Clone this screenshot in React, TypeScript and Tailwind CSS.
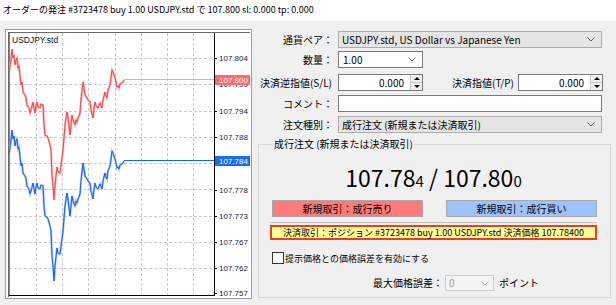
import React from "react";

const red: [number, number][] = [
  [9, 73], [11, 60], [12, 49], [13, 58], [14, 55], [15, 65], [16, 60], [17, 58], [18, 68], [19, 66],
  [21, 85], [22, 82], [23, 92], [25, 95], [26, 98], [27, 105], [29, 108], [30, 113], [31, 110], [33, 102],
  [34, 108], [35, 113], [36, 106], [37, 102], [38, 107], [40, 108], [41, 104], [43, 105], [44, 125], [45, 135],
  [47, 136], [48, 138], [50, 145], [51, 150], [52, 175], [53, 185], [54, 200], [55, 185], [57, 167], [58, 172],
  [60, 173], [61, 165], [62, 158], [63, 150], [65, 125], [67, 112], [68, 118], [70, 135], [71, 125], [72, 115],
  [73, 120], [75, 125], [76, 120], [77, 122], [78, 118], [80, 113], [81, 100], [83, 82], [84, 88], [85, 95],
  [87, 98], [88, 100], [90, 102], [91, 110], [93, 118], [94, 108], [95, 102], [96, 106], [98, 108], [100, 103],
  [102, 108], [103, 100], [105, 92], [106, 96], [107, 98], [108, 90], [110, 85], [111, 78], [112, 70], [113, 72],
  [115, 78], [116, 82], [117, 87], [118, 86], [119, 88], [120, 84], [122, 83], [123, 82], [124, 80],
];
const blue = red.map(([x, y]) => [x, y + 81] as [number, number]);
const pts = (a: [number, number][]) => a.map(([x, y]) => `${x},${y}`).join(" ");

const hGrid = [58, 84, 111, 137, 163, 189, 216, 242, 268];
const vGrid = [36.5, 62.5, 88.5, 115.5, 141.5, 167.5, 193.5];
const labels: [string, number][] = [
  ["107.804", 58], ["107.794", 111], ["107.788", 137],
  ["107.778", 190], ["107.773", 216], ["107.767", 242], ["107.762", 268], ["107.757", 293],
];
const hidden: [string, number][] = [["107.799", 84], ["107.783", 163]];

function Chart() {
  return (
    <svg width={241} height={264} viewBox="9 33 241 264" className="block">
      <defs>
        <clipPath id="c1"><rect x={215} y={85} width={35} height={6} /></clipPath>
        <clipPath id="c2"><rect x={215} y={166} width={35} height={6} /></clipPath>
      </defs>
      <rect x={9} y={33} width={241} height={264} fill="#ffffff" />
      {hGrid.map((y) => (
        <line key={y} x1={9} x2={214} y1={y + 0.5} y2={y + 0.5} stroke="#c8c8c8" strokeDasharray="3 2" />
      ))}
      {vGrid.map((x) => (
        <line key={x} x1={x} x2={x} y1={33} y2={295} stroke="#c8c8c8" strokeDasharray="3 2" />
      ))}
      <line x1={9.5} x2={9.5} y1={33} y2={296} stroke="#808080" />
      <line x1={214.5} x2={214.5} y1={33} y2={296} stroke="#000" />
      <line x1={9} x2={215} y1={295.5} y2={295.5} stroke="#000" />
      {labels.map(([t, y]) => (
        <g key={t}>
          <line x1={214} x2={217} y1={y + 0.5} y2={y + 0.5} stroke="#000" />
          <text x={219} y={y + 3} fontSize={8} fontFamily="Liberation Sans, Arial, sans-serif" fill="#1c1c3c">
            {t}
          </text>
        </g>
      ))}
      {hidden.map(([t, y], i) => (
        <g key={t}>
          <line x1={214} x2={217} y1={y + 0.5} y2={y + 0.5} stroke="#000" />
          <text x={219} y={y + 3} fontSize={8} fontFamily="Liberation Sans, Arial, sans-serif" fill="#1c1c3c" clipPath={i === 0 ? "url(#c1)" : "url(#c2)"}>
            {t}
          </text>
        </g>
      ))}
      <polyline points={pts(red)} fill="none" stroke="#f9b0b0" strokeWidth={2.2} />
      <polyline points={pts(red)} fill="none" stroke="#ee4b55" strokeWidth={1} />
      <line x1={124} x2={214} y1={79.5} y2={79.5} stroke="#f7a3a3" />
      <polyline points={pts(blue)} fill="none" stroke="#a8c4f4" strokeWidth={2.2} />
      <polyline points={pts(blue)} fill="none" stroke="#1760ea" strokeWidth={1} />
      <line x1={124} x2={214} y1={160.5} y2={160.5} stroke="#1566ea" strokeWidth={1} />
      <rect x={215} y={75} width={35} height={10} fill="#ff6a6a" />
      <text x={219} y={83} fontSize={8} fontFamily="Liberation Sans, Arial, sans-serif" fill="#ffffff">107.800</text>
      <rect x={215} y={156} width={35} height={10} fill="#1a6cf0" />
      <text x={219} y={164} fontSize={8} fontFamily="Liberation Sans, Arial, sans-serif" fill="#ffffff">107.784</text>
      <text x={12} y={43} fontSize={8.5} fontFamily="Liberation Sans, Arial, sans-serif" fill="#101030">USDJPY.std</text>
    </svg>
  );
}

function Chevron({ color = "#606060" }: { color?: string }) {
  return (
    <svg width={8} height={5} viewBox="0 0 8 5" className="block">
      <polyline points="0.5,0.5 4,4 7.5,0.5" fill="none" stroke={color} strokeWidth={1} />
    </svg>
  );
}

function Spin() {
  return (
    <div className="w-[12px] h-full flex flex-col border-l border-[#c8c8c8] bg-[#f0f0f0]">
      <div className="flex-1 flex items-center justify-center border-b border-[#c8c8c8]">
        <svg width={6} height={3} viewBox="0 0 6 3"><polygon points="0,3 3,0 6,3" fill="#000" /></svg>
      </div>
      <div className="flex-1 flex items-center justify-center">
        <svg width={6} height={3} viewBox="0 0 6 3"><polygon points="0,0 6,0 3,3" fill="#000" /></svg>
      </div>
    </div>
  );
}

export default function App() {
  return (
    <div className="w-[616px] h-[305px] bg-[#f0f0f0] overflow-hidden flex flex-col font-['Noto_Sans_CJK_JP',sans-serif] text-[#000]">
      <div className="h-[21px] shrink-0 bg-white pl-[3px] text-[9px] leading-[19px] whitespace-nowrap">
        オーダーの発注 #3723478 buy 1.00 USDJPY.std で 107.800 sl: 0.000 tp: 0.000
      </div>
      <div className="flex pt-[8px]">
        <div className="ml-[5px] w-[247px] h-[270px] border border-[#a0a0a0] bg-white p-[2px] shrink-0">
          <div className="border-l border-t border-[#6a6a6a] w-[242px] h-[265px] overflow-hidden">
            <Chart />
          </div>
        </div>
        <div className="ml-[6px] w-[350px] flex flex-col text-[10px] leading-none">
          <div className="mt-[2px] h-[17px] flex items-center">
            <div className="w-[76px] text-right pr-[1px]">通貨ペア：</div>
            <div className="ml-[4px] w-[264px] h-full border border-[#adadad] bg-[#e5e5e5] flex items-center justify-between pl-[3px] pr-[6px]">
              <span>USDJPY.std, US Dollar vs Japanese Yen</span>
              <Chevron />
            </div>
          </div>
          <div className="mt-[3px] h-[17px] flex items-center">
            <div className="w-[76px] text-right pr-[1px]">数量：</div>
            <div className="ml-[4px] w-[85px] h-full border border-[#7a7a7a] bg-white flex items-center justify-between pl-[4px] pr-[6px]">
              <span>1.00</span>
              <Chevron />
            </div>
          </div>
          <div className="mt-[6px] h-[17px] flex items-center">
            <div className="w-[76px] text-right whitespace-nowrap pr-[2px]">決済逆指値(S/L)</div>
            <div className="ml-[4px] w-[85px] h-full border border-[#7a7a7a] bg-white flex items-center justify-end">
              <span className="pr-[6px]">0.000</span>
              <Spin />
            </div>
            <div className="ml-[29px] w-[61px] whitespace-nowrap">決済指値(T/P)</div>
            <div className="ml-[5px] w-[85px] h-full border border-[#7a7a7a] bg-white flex items-center justify-end">
              <span className="pr-[6px]">0.000</span>
              <Spin />
            </div>
          </div>
          <div className="mt-[4px] h-[17px] flex items-center">
            <div className="w-[76px] text-right pr-[1px]">コメント：</div>
            <div className="ml-[4px] w-[264px] h-full border border-[#7a7a7a] bg-white" />
          </div>
          <div className="mt-[4px] h-[17px] flex items-center">
            <div className="w-[76px] text-right pr-[1px]">注文種別：</div>
            <div className="ml-[4px] w-[264px] h-full border border-[#adadad] bg-[#e5e5e5] flex items-center justify-between pl-[3px] pr-[6px]">
              <span>成行注文 (新規または決済取引)</span>
              <Chevron />
            </div>
          </div>
          <fieldset className="mt-[6px] w-[350px] h-[159px] border border-[#d8d8d8] pl-[11px] pr-[13px] flex flex-col">
            <legend className="ml-[3px] px-[1px] leading-[10px]">成行注文 (新規または決済取引)</legend>
            <div className="mt-[17px] h-[30px] flex items-baseline justify-center text-[#000]">
              <span className="text-[23px] leading-none">107.78</span>
              <span className="text-[15px] leading-none">4</span>
              <span className="text-[23px] leading-none">&nbsp;/ 107.80</span>
              <span className="text-[15px] leading-none">0</span>
            </div>
            <div className="mt-[4px] flex justify-between pl-[2px]">
              <div className="w-[151px] h-[17px] border border-[#a8a8a8] bg-[#ff7a7a] flex items-center justify-center">新規取引：成行売り</div>
              <div className="w-[151px] h-[17px] border border-[#a8a8a8] bg-[#9cc3ff] flex items-center justify-center">新規取引：成行買い</div>
            </div>
            <div className="mt-[5px] w-[327px] border-t border-[#c0c0c0] pt-[2px]">
              <div className="h-[15px] border-2 border-[#e8401a] bg-[#ffff99] flex items-center justify-center whitespace-nowrap text-[9px]">
                決済取引：ポジション #3723478 buy 1.00 USDJPY.std 決済価格 107.78400
              </div>
            </div>
            <div className="mt-[12px] flex items-center pl-[2px]">
              <div className="w-[12px] h-[12px] border border-[#333] bg-white" />
              <span className="ml-[1px] text-[9px]">提示価格との価格誤差を有効にする</span>
            </div>
            <div className="mt-[11px] flex items-center pl-[103px]">
              <span className="w-[68px] whitespace-nowrap">最大価格誤差：</span>
              <div className="ml-[4px] w-[49px] h-[16px] border border-[#cccccc] bg-[#f4f4f4] flex items-center justify-between pl-[3px] pr-[4px] text-[#a0a0a0]">
                <span>0</span>
                <Chevron color="#b0b0b0" />
              </div>
              <span className="ml-[5px]">ポイント</span>
            </div>
          </fieldset>
        </div>
      </div>
    </div>
  );
}
